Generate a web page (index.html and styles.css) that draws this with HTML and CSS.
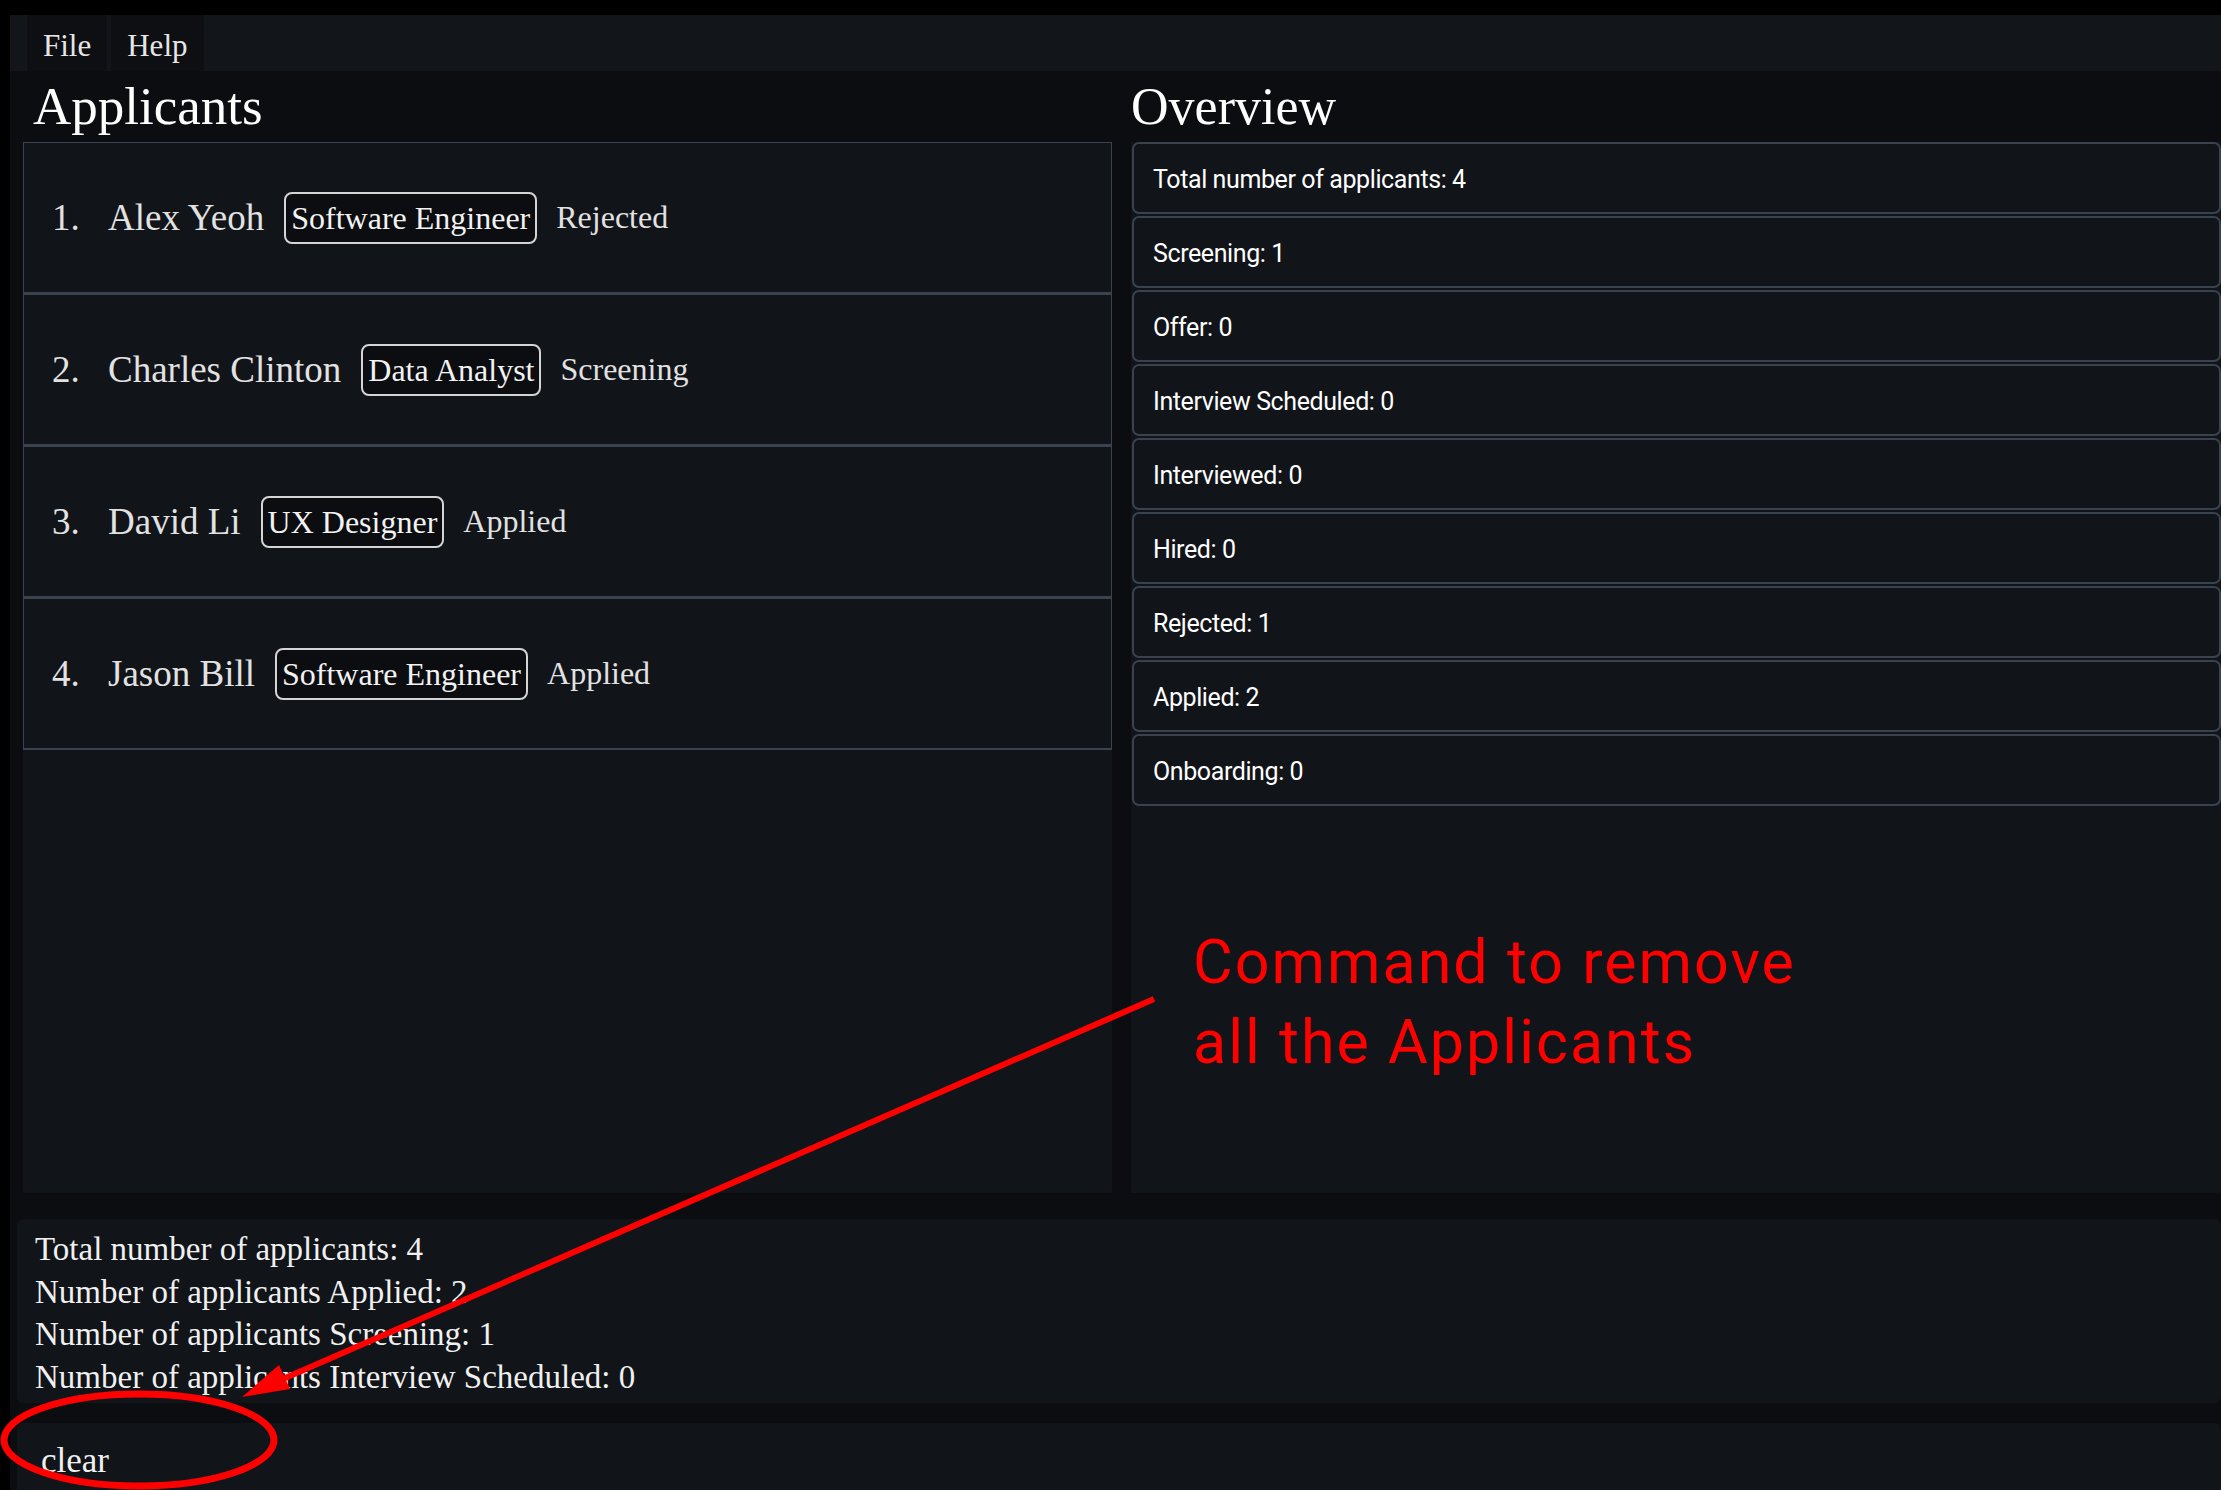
FILE: index.html
```html
<!DOCTYPE html>
<html lang="en">
<head>
<meta charset="utf-8">
<title>Applicants</title>
<link rel="stylesheet" href="styles.css">
</head>
<body>
<div class="app">
  <nav class="menubar">
    <span class="menu-item">File</span>
    <span class="menu-item">Help</span>
  </nav>
  <main class="columns">
    <section class="col col-left">
      <h1 class="col-title">Applicants</h1>
      <div class="panel">
        <div class="card">
          <span class="idx">1.</span><span class="name">Alex Yeoh</span><span class="tag">Software Engineer</span><span class="status">Rejected</span>
        </div>
        <div class="card">
          <span class="idx">2.</span><span class="name">Charles Clinton</span><span class="tag">Data Analyst</span><span class="status">Screening</span>
        </div>
        <div class="card">
          <span class="idx">3.</span><span class="name">David Li</span><span class="tag">UX Designer</span><span class="status">Applied</span>
        </div>
        <div class="card">
          <span class="idx">4.</span><span class="name">Jason Bill</span><span class="tag">Software Engineer</span><span class="status">Applied</span>
        </div>
      </div>
    </section>
    <section class="col col-right">
      <h1 class="col-title title-right">Overview</h1>
      <div class="panel">
        <div class="stat">Total number of applicants: 4</div>
        <div class="stat">Screening: 1</div>
        <div class="stat">Offer: 0</div>
        <div class="stat">Interview Scheduled: 0</div>
        <div class="stat">Interviewed: 0</div>
        <div class="stat">Hired: 0</div>
        <div class="stat">Rejected: 1</div>
        <div class="stat">Applied: 2</div>
        <div class="stat">Onboarding: 0</div>
      </div>
    </section>
  </main>
  <div class="result">
    <div>Total number of applicants: 4</div>
    <div>Number of applicants Applied: 2</div>
    <div>Number of applicants Screening: 1</div>
    <div>Number of applicants Interview Scheduled: 0</div>
  </div>
  <div class="command">clear</div>
</div>

<div class="note">Command to remove<br>all the Applicants</div>
<svg class="overlay" width="2221" height="1490" viewBox="0 0 2221 1490">
  <line x1="1154" y1="999" x2="276" y2="1382" stroke="#ff0000" stroke-width="6"/>
  <polygon points="242,1397 290,1389 279,1365" fill="#ff0000"/>
  <ellipse cx="139" cy="1440" rx="135" ry="46" fill="none" stroke="#ff0000" stroke-width="7"/>
</svg>
</body>
</html>
```

FILE: styles.css
```css
html, body {
  margin: 0;
  padding: 0;
  background: #000;
}
body {
  width: 2221px;
  height: 1490px;
  overflow: hidden;
  position: relative;
  padding: 15px 0 0 10px;
  box-sizing: border-box;
  font-family: "Liberation Serif", "Times New Roman", serif;
  color: #e4e4e4;
}
.app {
  background: #0b0d10;
  height: 1475px;
  display: flex;
  flex-direction: column;
}
.menubar {
  height: 56px;
  background: #121519;
  display: flex;
  gap: 4px;
  padding-left: 17px;
}
.menu-item {
  background: #0d0f13;
  font-size: 31px;
  line-height: 50px;
  padding: 6px 16px 0 16px;
  color: #e6e6e6;
}
.columns {
  display: grid;
  grid-template-columns: 1102px 1090px;
  column-gap: 19px;
  height: 1122px;
}
.col {
  display: flex;
  flex-direction: column;
}
.col-left {
  padding-left: 13px;
}
.col-title {
  margin: 0;
  height: 71px;
  font-weight: normal;
  font-size: 53px;
  line-height: 71px;
  color: #ffffff;
  padding-left: 10px;
}
.title-right {
  padding-left: 0;
  font-size: 52px;
}
.panel {
  flex: 1;
  background: #111419;
}
.card {
  height: 152px;
  box-sizing: border-box;
  border: 1px solid #3a4250;
  border-bottom-width: 2px;
  border-top-width: 1px;
  display: flex;
  align-items: center;
  padding-left: 28px;
  font-size: 37px;
  color: #e2e2e2;
}
.idx {
  width: 56px;
}
.name {
  margin-right: 20px;
}
.tag {
  font-size: 32px;
  border: 2px solid #d4d4d4;
  border-radius: 8px;
  background: #0b0d10;
  padding: 6px 5px;
  line-height: 36px;
  color: #f2f2f2;
  margin-right: 19px;
}
.status {
  font-size: 32px;
  color: #e2e2e2;
}
.col-right .panel {
  padding-left: 1px;
}
.stat {
  height: 72px;
  box-sizing: border-box;
  margin-bottom: 2px;
  border: 2px solid #3a4250;
  border-radius: 7px;
  display: flex;
  align-items: center;
  padding-left: 19px;
  padding-top: 2px;
  font-family: Roboto, "Noto Sans", sans-serif;
  font-size: 25px;
  letter-spacing: -0.4px;
  color: #ffffff;
}
.result {
  margin: 26px 0 0 7px;
  height: 184px;
  box-sizing: border-box;
  background: #111419;
  border-radius: 6px;
  padding: 9px 18px 0 18px;
  font-size: 33px;
  line-height: 42.5px;
  color: #f0f0f0;
}
.command {
  margin: 20px 0 0 7px;
  flex: 1;
  background: #111419;
  border-radius: 6px 6px 0 0;
  padding: 18px 0 0 24px;
  font-size: 35px;
  line-height: 40px;
  color: #f0f0f0;
}
.note {
  position: absolute;
  left: 1193px;
  top: 922px;
  font-family: Roboto, "Noto Sans", sans-serif;
  font-size: 61px;
  letter-spacing: 2px;
  line-height: 80px;
  color: #ff0000;
}
.overlay {
  position: absolute;
  left: 0;
  top: 0;
  pointer-events: none;
}
```
